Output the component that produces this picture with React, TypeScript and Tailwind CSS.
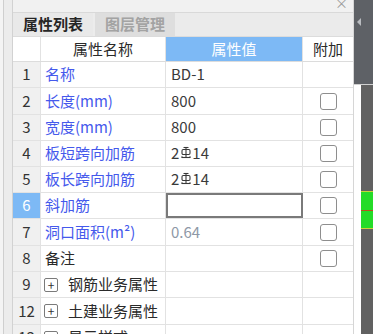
import React from 'react';

type Row = {
  no: string;
  name: string;
  value?: React.ReactNode;
  nameColor?: 'blue' | 'black';
  check?: boolean;
  expand?: boolean;
  selected?: boolean;
  muted?: boolean;
  h: number;
};

const Rebar = () => (
  <svg width="10" height="13" viewBox="0 0 10 13" className="ml-[2px] mr-[1px] -mt-[3px]" fill="none" stroke="#3a3a3a" strokeWidth="1.1">
    <path d="M2.5 1.5H7.5" />
    <rect x="1" y="3.5" width="8" height="5" rx="1.2" />
    <path d="M5 1V11.5" />
    <path d="M0.5 11.5H9.5" />
    <path d="M1 11.5V10.3M9 11.5V10.3" />
  </svg>
);

const bar = (
  <span className="flex items-center">
    2<Rebar />14
  </span>
);

const rows: Row[] = [
  { no: '1', name: '名称', value: 'BD-1', nameColor: 'blue', h: 26 },
  { no: '2', name: '长度(mm)', value: '800', nameColor: 'blue', check: true, h: 27 },
  { no: '3', name: '宽度(mm)', value: '800', nameColor: 'blue', check: true, h: 26 },
  { no: '4', name: '板短跨向加筋', value: bar, nameColor: 'blue', check: true, h: 26 },
  { no: '5', name: '板长跨向加筋', value: bar, nameColor: 'blue', check: true, h: 26 },
  { no: '6', name: '斜加筋', nameColor: 'blue', check: true, selected: true, h: 26 },
  { no: '7', name: '洞口面积(m²)', value: '0.64', nameColor: 'blue', check: true, muted: true, h: 27 },
  { no: '8', name: '备注', check: true, h: 26 },
  { no: '9', name: '钢筋业务属性', expand: true, h: 26 },
  { no: '12', name: '土建业务属性', expand: true, h: 27 },
  { no: '13', name: '显示样式', expand: true, h: 26 },
];

const Check = () => (
  <span className="block w-[17px] h-[17px] rounded-[3px] border-[1.5px] border-[#8e8e8e] bg-white" />
);

const Plus = () => (
  <span className="flex w-[14px] h-[14px] items-center justify-center rounded-[2px] border border-[#7a7a7a] text-[12px] leading-none text-[#333] mr-[10px]">
    +
  </span>
);

export default function App() {
  return (
    <div
      className="flex w-[373px] h-[334px] overflow-hidden bg-white text-[15px]"
      style={{ fontFamily: '"Noto Sans CJK SC", "Noto Sans", sans-serif' }}
    >
      {/* left docking strip */}
      <div className="flex w-[13px] shrink-0">
        <div className="w-[3px] bg-[#f4f4f4]" />
        <div className="w-px bg-[#cfcfcf]" />
        <div className="flex-1 bg-[#ececec]" />
        <div className="w-px bg-[#d2d2d2]" />
      </div>

      {/* panel */}
      <div className="flex flex-col w-[341px] shrink-0 border-r border-[#d6d6d6]">
        <div className="relative shrink-0 h-[13px] bg-[#f1f1f1] border-b border-[#d9d9d9] overflow-hidden">
          <span className="absolute right-[5px] -top-[4px] text-[13px] leading-none text-[#9a9a9a]">×</span>
        </div>
        <div className="flex shrink-0 h-[23px] bg-[#ebebeb]">
          <div className="flex w-[80px] items-center justify-center font-bold text-[#262626] bg-[#e9e9e9]">
            属性列表
          </div>
          <div className="w-[2px] bg-[#ececec]" />
          <div className="flex w-[80px] items-center justify-center font-bold text-[#a3a3a3] bg-[#dedede]">
            图层管理
          </div>
          <div className="flex-1 bg-[#ebebeb]" />
        </div>

        {/* header */}
        <div className="flex shrink-0 h-[26px] border-y border-[#dcdcdc] bg-white">
          <div className="w-[28px] border-r border-[#e2e2e2]" />
          <div className="flex w-[125px] items-center justify-center text-[#2a2a2a] border-r border-[#e2e2e2]">
            属性名称
          </div>
          <div className="flex w-[137px] items-center justify-center bg-[#7db9f5] text-white border-r border-[#e2e2e2]">
            属性值
          </div>
          <div className="flex w-[50px] items-center justify-center text-[#2a2a2a]">附加</div>
        </div>

        {rows.map((r) => (
          <div
            key={r.no}
            className="flex shrink-0 border-b border-[#e2e2e2]"
            style={{ height: r.h }}
          >
            <div
              className={`flex w-[28px] items-center justify-center border-r border-[#e2e2e2] ${
                r.selected ? 'bg-[#7db9f5] text-white' : 'bg-[#f0f0f0] text-[#333]'
              }`}
            >
              {r.no}
            </div>
            <div
              className={`flex w-[125px] items-center whitespace-nowrap border-r border-[#e2e2e2] ${
                r.expand ? 'pl-[3px]' : 'pl-[4px]'
              } ${r.nameColor === 'blue' ? 'text-[#4559ec]' : 'text-[#2a2a2a]'}`}
            >
              {r.expand && <Plus />}
              {r.name}
            </div>
            <div
              className={`flex w-[137px] items-center ${
                r.selected ? 'border-2 border-[#7a7a7a] pl-[4px]' : 'border-r border-[#e2e2e2] pl-[5px]'
              } ${r.muted ? 'text-[#8e98a6]' : 'text-[#3a3a3a]'}`}
            >
              {r.value}
            </div>
            <div className="flex w-[50px] items-center justify-center">{r.check && <Check />}</div>
          </div>
        ))}
      </div>

      {/* right side */}
      <div className="flex flex-col flex-1">
        <div className="relative shrink-0 h-[85px] bg-[#5e6166] border-b border-[#d0d0d0]">
          <span className="absolute left-[3px] top-[18px] w-0 h-0 border-y-[4px] border-y-transparent border-r-[4px] border-r-[#b9bcc0]" />
        </div>
        <div className="flex flex-1">
          <div className="w-[7px] bg-white" />
          <div className="flex flex-col flex-1 bg-[#616161] pt-[106px]">
            <div className="h-[38px] bg-[#24dc28] border-y border-[#c9d23a] flex flex-col justify-center">
              <div className="h-px bg-[#b5541e]" />
            </div>
          </div>
        </div>
      </div>
    </div>
  );
}
